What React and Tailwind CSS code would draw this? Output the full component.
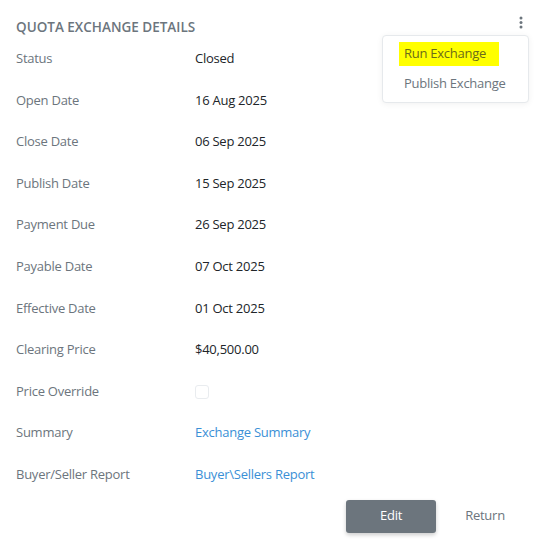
import { useState } from "react";

// Quota exchange detail panel
const rows = [
  { label: "Status", value: "Closed" },
  { label: "Open Date", value: "16 Aug 2025" },
  { label: "Close Date", value: "06 Sep 2025" },
  { label: "Publish Date", value: "15 Sep 2025" },
  { label: "Payment Due", value: "26 Sep 2025" },
  { label: "Payable Date", value: "07 Oct 2025" },
  { label: "Effective Date", value: "01 Oct 2025" },
  { label: "Clearing Price", value: "$40,500.00" },
  { label: "Price Override", type: "checkbox" },
  { label: "Summary", value: "Exchange Summary", type: "link" },
  { label: "Buyer/Seller Report", value: "Buyer\\Sellers Report", type: "link" },
];

const KebabIcon = () => (
  <svg width="4" height="14" viewBox="0 0 4 14" className="fill-[#6c757d]">
    <circle cx="2" cy="2" r="1.5" />
    <circle cx="2" cy="6.5" r="1.5" />
    <circle cx="2" cy="11" r="1.5" />
  </svg>
);

export default function App() {
  const [override, setOverride] = useState(false);

  return (
    <div className="relative min-h-[553px] w-[548px] bg-white font-['Open_Sans',sans-serif] text-[13px] tracking-[-0.25px]">
      <div className="pl-4 pr-[8px] pt-[17px]">
        <h2 className="h-[21px] text-[13.5px] leading-[21px] font-semibold uppercase text-[#6c757d] tracking-[0px]">
          Quota Exchange Details
        </h2>

        <div>
          {rows.map((row) => (
            <div key={row.label} className="grid h-[41.6px] grid-cols-[179px_1fr] items-center">
              <span className="text-[#6c757d]">{row.label}</span>
              {row.type === "checkbox" ? (
                <button
                  onClick={() => setOverride(!override)}
                  className="h-[14px] w-[14px] rounded-[3px] border border-[#e9ecef] bg-white"
                />
              ) : row.type === "link" ? (
                <a href="#" className="text-[#3a8fd6]">{row.value}</a>
              ) : (
                <span className="text-[#212529]">{row.value}</span>
              )}
            </div>
          ))}
        </div>

        <div className="mt-[4px] flex justify-end pr-[16px]">
          <button className="h-[33px] w-[90px] rounded-[3px] bg-[#6c757d] text-white shadow-[0_2px_4px_rgba(0,0,0,0.2)]">
            Edit
          </button>
          <button className="ml-[10px] h-[33px] w-[78px] text-[#6c757d]">Return</button>
        </div>
      </div>

      {/* action menu */}
      <button className="absolute left-[518px] top-[15px] flex h-[16px] w-[6px] items-center justify-center">
        <KebabIcon />
      </button>
      <div className="absolute left-[382px] top-[35px] h-[68px] w-[147px] rounded-[4px] border border-[#e6e9ec] bg-white pt-[6px] pl-[16px] shadow-[0_1px_6px_rgba(0,0,0,0.06)]">
        <div className="flex h-[24px] w-[100px] items-center bg-[#ffff00] px-[5px] text-[#6b6b1a]">Run Exchange</div>
        <div className="flex h-[35px] items-center px-[5px] text-[#6c757d]">Publish Exchange</div>
      </div>
    </div>
  );
}
